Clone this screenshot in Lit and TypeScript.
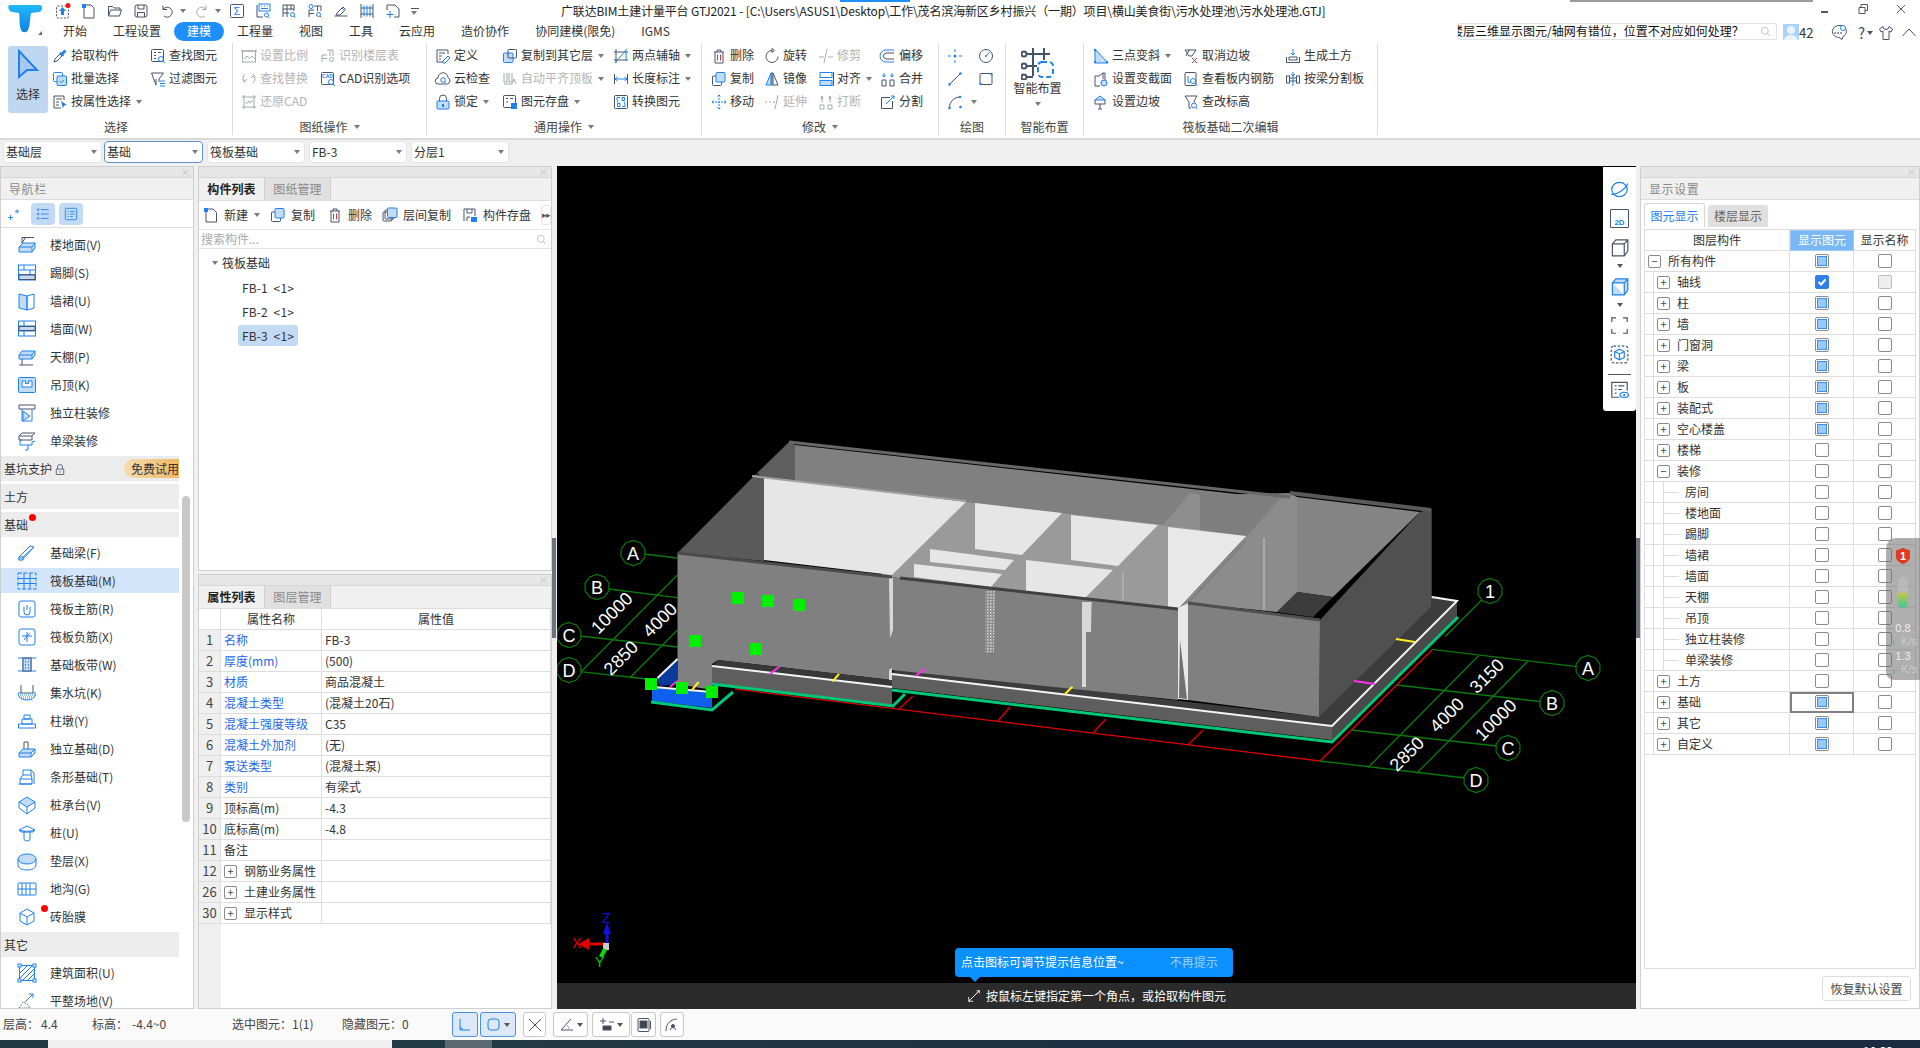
import { LitElement, html, css, svg } from "lit";
import { customElement } from "lit/decorators.js";

// icons are 16x16 unless noted, classes: b blue stroke, f light fill, k solid blue, g grey stroke
const IC: Record<string, unknown> = {
  upload: svg`<rect x="1.5" y="3" width="12" height="12" rx="1" stroke-dasharray="2 1.5"/><path class="k" d="M7.5 4l3.5 4H9v4H6V8H4z"/><circle class="red" cx="13" cy="2.5" r="2.5"/>`,
  newdoc: svg`<path d="M3 2h7l3 3v10H3z"/><rect class="k" x="1" y="1" width="4" height="4"/>`,
  open: svg`<path d="M1.5 13V3.5h4L7 5h6v2M1.5 13l2-6h11l-2 6z"/>`,
  save: svg`<rect x="2" y="2" width="12" height="12" rx="2"/><path d="M5 2v4h6V2M4.5 14V9.5h7V14"/>`,
  undo: svg`<path d="M4 2.5v4h4M4 6.5a5 5 0 111 6.5"/>`,
  redo: svg`<path class="g" d="M12 2.5v4H8M12 6.5a5 5 0 10-1 6.5"/>`,
  sigma: svg`<rect x="1.5" y="1.5" width="13" height="13" rx="1"/><text class="tx" x="8" y="12" text-anchor="middle" font-size="11">Σ</text>`,
  q1: svg`<path d="M2 2v12h6"/><rect class="b" x="4" y="1" width="11" height="7"/><path class="b" d="M6 3h1M9 3h1M12 3h1M6 5.500h7"/><circle class="b" cx="11.500" cy="12" r="2"/><path class="b" d="M13 13.500l1.500 1.500"/>`,
  q2: svg`<path d="M2 14V2h11v6M2 6h11M2 10h6M6 2v12M10 2v5"/><circle class="b" cx="11.500" cy="11.500" r="2"/><path class="b" d="M13 13l1.500 1.500"/>`,
  q3: svg`<path d="M2 14V7h5M7 3h7v5M2 10.500h5M10.500 3v5"/><circle class="b" cx="4" cy="3.500" r="2"/><circle class="b" cx="11.500" cy="11.500" r="2"/><path class="b" d="M13 13l1.500 1.500"/>`,
  pen: svg`<path d="M1.500 13h13M4 10l6-6 2.500 2.500L7 12H3z"/><path class="b" d="M9 5l2.500 2.500"/>`,
  ruler: svg`<path d="M2 1v14M14 1v14M2 5h12M2 11h12"/><path class="b" d="M5 2.500v11M8 2.500v11M11 2.500v11"/>`,
  q7: svg`<path d="M2 7V2h8l4 4v8H9"/><path class="b" d="M5 8v7M1.500 11.500h7"/>`,
  pick: svg`<path d="M2 14l1-3 5-5 2 2-5 5z"/><path class="k" d="M9.500 4.500l3-3 2 2-3 3 .5 1-1 1-3.500-3.500 1-1z"/>`,
  batch: svg`<rect class="b" x="1.500" y="1.500" width="9" height="9" rx="1"/><rect class="b f" x="5" y="5" width="9.500" height="9.500" rx="1"/><path class="b" d="M7.500 10l2 1.500 2.500-2.500"/>`,
  attr: svg`<path d="M12 6V2H2v12h7"/><path d="M4 5h6M4 8h3M4 11h3"/><path class="k" d="M9 7l6 4-3 .5-1 3z"/>`,
  find: svg`<rect x="1.500" y="1.500" width="12" height="12" rx="1"/><path d="M4 4.500h2M4 7.500h2M4 10.500h2M8 4.500h3"/><circle class="b" cx="11" cy="11" r="2.500"/><path class="b" d="M13 13l2 2"/>`,
  filter: svg`<path d="M1.500 2h12L9 8v3M6 8v6L1.500 2"/><path class="b" d="M10 10h5M10 12.500h5M10 15h5"/>`,
  scale: svg`<rect class="g" x="1.500" y="3" width="13" height="11"/><path class="g" d="M1 1.500l0 3M15 1.500l0 3M1 3h14M3 11l3-3 2.500 2.500L11 8l3 3"/>`,
  rec: svg`<path class="g" d="M2 14V7h5M7 2h6v6M2 10.500h5M10 2v6"/><circle class="g" cx="11.500" cy="11.500" r="2"/>`,
  replace: svg`<path class="g" d="M4 3a6 6 0 000 9M12 3a6 6 0 010 9M2 8l2 2 2-2M10 7l2-2 2 2"/>`,
  cad: svg`<rect x="1.500" y="1.500" width="12" height="12" rx="1"/><text class="tb" x="7.500" y="7" text-anchor="middle" font-size="5">CAD</text><circle class="b" cx="11" cy="11" r="2.500"/><path class="b" d="M13 13l2 2"/>`,
  restore: svg`<path class="g" d="M1 3h14M3 1v14M1 13h14M13 1v14M5 10l3-3 1 2 3-3"/>`,
  define: svg`<path d="M13 6V2H2v12h6"/><path d="M4 5h6M4 8h3M4 11h2"/><path class="b" d="M8 13l5-5 2 2-5 5H8z"/>`,
  cloud: svg`<path d="M3.500 13a3 3 0 01-.5-6A5 5 0 0113 6.500 3.500 3.500 0 0112.500 13z"/><circle class="b" cx="8" cy="9" r="2.300"/><path class="b" d="M9.700 10.700l1.500 1.500"/>`,
  lock: svg`<path d="M4.500 7V4.500a3.500 3.500 0 017 0V7"/><rect class="b f" x="2" y="7" width="12" height="8" rx="1"/><path class="k" d="M7 10h2v3H7z"/>`,
  copyto: svg`<rect class="f b" x="1.500" y="5" width="9.500" height="9.500" rx="1"/><rect x="6" y="1.500" width="8.500" height="8.500" rx="1"/>`,
  level: svg`<path class="g" d="M2 2v9h3V2M7 2v9h3V2M2 13h8l2-5 2 5"/>`,
  store: svg`<rect x="1.500" y="1.500" width="12" height="12" rx="1"/><path d="M4 4.500h2M4 8h2M8 4.500h3"/><path class="k" d="M9 9h6v6H9z"/>`,
  twopt: svg`<path d="M3 1v14M1 4h14M1 12h14"/><path class="b" d="M2 15L14 1M13 3v10"/>`,
  dim: svg`<path d="M1.500 3v10M14.500 3v10"/><path class="b" d="M2 8h12M2 8l2.500-2M2 8l2.500 2M14 8l-2.500-2M14 8l-2.500 2"/>`,
  conv: svg`<rect x="1.500" y="1.500" width="13" height="13" rx="1"/><path class="b" d="M4 6V3.500h3M12 10v2.500H9M5 8.500l-1-2.500M11 7.500l1 2.500M4.500 12.500H7V9.500H4.500zM9 3.500h2.500V6.500H9z"/>`,
  del: svg`<path d="M3 4h10M6 4V2h4v2M4 4v11h8V4"/><path class="r" d="M6.500 6.500v6M9.500 6.500v6"/>`,
  copy: svg`<rect x="1.500" y="5" width="9" height="9.500" rx="1"/><rect class="f b" x="5" y="1.500" width="9" height="9.500" rx="1"/>`,
  move: svg`<path class="b" d="M8 1v14M1 8h14M8 1L6 3M8 1l2 2M8 15l-2-2M8 15l2-2M1 8l2-2M1 8l2 2M15 8l-2-2M15 8l-2 2" stroke-dasharray="2 1"/>`,
  rotate: svg`<path d="M8 2.500a6 6 0 106 6"/><path d="M8 .5v4l2.500-2z"/>`,
  mirror: svg`<path class="f b" d="M7 2L2 14h5z"/><path d="M9 2l5 12H9zM8 1v14"/>`,
  extend: svg`<path class="g" d="M1 8h2M5 8h2M9 8h2M11 15l3-14" />`,
  trim: svg`<path class="g" d="M1 9h5M6 15L9 1M10 9h5"/>`,
  align: svg`<rect class="b" x="2" y="1.500" width="12" height="5"/><rect class="f b" x="2" y="9.500" width="12" height="5"/><path d="M15.500 1v14"/>`,
  brk: svg`<path class="g" d="M2 15v-4h4v4zM10 15v-4h4v4zM4 8V2M12 8V2M3 5l1-3 1 3M11 5l1-3 1 3"/>`,
  offset: svg`<path class="b" d="M14 2H6a6 6 0 000 12h8"/><path d="M14 5H6.500a3 3 0 000 6H14"/>`,
  merge: svg`<path d="M2 9h4v6H2zM10 9h4v6h-4z"/><path class="b" d="M4 2v4M12 2v4M2.500 4L4 6l1.500-2M10.500 4L12 6l1.500-2"/>`,
  split: svg`<path d="M10 3.500H1.500v11h11V7"/><path class="b" d="M6 10l8-8M11 2h3v3"/>`,
  point: svg`<path class="b" d="M8 1v3M8 12v3M1 8h3M12 8h3"/><circle class="k" cx="8" cy="8" r="1.500"/>`,
  circle: svg`<circle cx="8" cy="8" r="6.500"/><path class="b" d="M8 8l3.500-3.500"/><circle class="k" cx="8" cy="8" r="1"/>`,
  line: svg`<path d="M2.500 13.500l11-11"/><circle class="k" cx="2.500" cy="13.500" r="1.300"/><circle class="k" cx="13.500" cy="2.500" r="1.300"/>`,
  rect: svg`<rect x="2" y="2.500" width="12" height="11" rx="1"/><circle class="k" cx="2.500" cy="13" r="1.200"/><circle class="k" cx="13.500" cy="3" r="1.200"/>`,
  arc: svg`<path d="M2.500 14c0-6 4-11 11-11"/><circle class="k" cx="2.500" cy="14" r="1.300"/><circle class="k" cx="13.500" cy="13" r="1.300"/><circle class="k" cx="13" cy="3" r="1.300"/>`,
  threep: svg`<path class="b f" d="M2 1v14h13z"/><circle class="k" cx="2" cy="2" r="1.200"/><circle class="k" cx="2" cy="14" r="1.200"/><circle class="k" cx="14" cy="14" r="1.200"/>`,
  varsec: svg`<path d="M2 5h4l4-3h2v7M2 5v10h5"/><path d="M10 2v6"/><circle class="b f" cx="11" cy="12" r="3"/>`,
  slope: svg`<path class="b f" d="M2 6l5-4 5 4z"/><path d="M2 6v4h10V6M7 10v5M5 15h4"/>`,
  cancel: svg`<path d="M2 2h11l-4 6H6zM3 8l3-6"/><path class="r" d="M9 10l5 5M14 10l-5 5"/>`,
  rebar: svg`<rect x="2" y="1.500" width="11" height="13" rx="1"/><path class="b" d="M5 5v6l2 1"/><circle class="b" cx="10" cy="10" r="2.500"/><path class="b" d="M12 12l2.500 2.500"/>`,
  elev: svg`<path d="M2 2h12l-3 5 1 1.500M2 2l4 6v6h2"/><circle class="b" cx="11" cy="11.500" r="2.500"/><path class="b" d="M13 13.500l1.500 1.500"/>`,
  soil: svg`<path d="M1.500 9v5.500h13V9"/><path d="M4 9h8v3H4z"/><path class="b" d="M8 1v6M6 5l2 2 2-2"/>`,
  splitb: svg`<rect x="1.500" y="5" width="3" height="7"/><rect x="11.500" y="5" width="3" height="7"/><path d="M5 7h6M5 10h6"/><path class="b" d="M8 1v14M6 3l2 2 2-2"/>`,
  search: svg`<circle class="g" cx="7" cy="7" r="5"/><path class="g" d="M11 11l3.500 3.500"/>`,
  chat: svg`<path d="M3 4a7 6 0 1110 7.500l-1 3-3-2a7 6 0 01-6-8.500z"/><circle cx="5" cy="8" r=".5"/><circle cx="8" cy="8" r=".5"/><circle cx="11" cy="8" r=".5"/><circle class="b bgw" cx="13" cy="3" r="2.500"/>`,
  shirt: svg`<path d="M5 1.500L1.500 4l1.500 3 2-1v8.500h6V6l2 1 1.500-3L11 1.500a3 3 0 01-6 0z"/>`,
  chevron: svg`<path d="M1.500 11L8 4l6.500 7"/>`,
  plus2: svg`<path class="b" d="M1 12h6M4 9v6M9 5h5M11.500 2.500v5"/>`,
  list: svg`<circle class="b" cx="2.500" cy="3" r="1"/><circle class="b" cx="2.500" cy="8" r="1"/><circle class="b" cx="2.500" cy="13" r="1"/><path class="b" d="M5.500 3h9M5.500 8h9M5.500 13h9"/>`,
  doclist: svg`<rect class="b" x="1.500" y="1.500" width="13" height="13" rx="1"/><path class="b" d="M4 5h1.500M7 5h5M4 8h1.500M7 8h5M4 11h1.500M7 11h3"/>`,
  nnew: svg`<path d="M3 2h7l3.500 3.500V15H3z"/><rect class="k" x="1" y="1" width="4" height="4"/>`,
  layer: svg`<rect x="1" y="5" width="9" height="9" rx="1"/><rect x="3" y="3" width="9" height="9" rx="1" /><rect class="f b" x="5.500" y="1" width="9.500" height="9.500" rx="1"/>`,
  csave: svg`<path d="M2 14V2h11v7M5 2v4h5V2M5 14v-4h3"/><path class="k" d="M9 10h6v5H9z"/>`,
  globe: svg`<ellipse class="b" cx="8" cy="8" rx="6.500" ry="6"/><path class="b" d="M1 12c4 1 12-4 14-9"/>`,
  cube: svg`<path d="M2 5v10h10V5zM2 5l3-3.500h10V11l-3 4M12 5l3-3.500"/>`,
  cubef: svg`<path class="b f" d="M2 5v10h10V5zM2 5l3-3.500h10V11l-3 4M12 5l3-3.500"/>`,
  frame: svg`<path d="M1.500 5V1.500H5M11 1.500h3.500V5M1.500 11v3.500H5M11 14.500h3.500V11"/>`,
  dcube: svg`<rect x="1" y="1" width="14" height="14" rx="2" stroke-dasharray="2 1.500"/><path class="b" d="M8 3.500l4 2v5l-4 2-4-2v-5zM4 5.500l4 2 4-2M8 7.500v5"/>`,
  doceye: svg`<path d="M14.500 9V2h-13v12.500H8"/><path d="M4 5h1.500M7 5h5M4 8h1.500M7 8h3M4 11h1.500"/><ellipse class="b" cx="12" cy="12.500" rx="3.500" ry="2.200"/><circle class="k" cx="12" cy="12.500" r="1"/>`,
  corner: svg`<path d="M14 2L2 14M2 14h5M2 14V9M9 7l5-5M11 2h3v3" />`,
  ortho: svg`<path class="b" d="M3 2v11h10"/><path class="b" d="M3 11h2v2"/>`,
  srect: svg`<rect class="b" x="2" y="2" width="11" height="11" rx="3"/>`,
  cross: svg`<path d="M2 2l12 12M14 2L2 14"/>`,
  angle: svg`<path d="M12 2L2 13h12"/><path class="g" d="M8 8q2 2 2 5"/>`,
  dimt: svg`<path d="M4 1v6M1 4h6"/><rect x="4" y="9" width="8" height="4" fill="#444"/><path d="M10 5h5"/>`,
  map3: svg`<rect x="2" y="1.500" width="11" height="13" rx="1"/><rect x="4" y="4" width="7" height="7" fill="#444"/><path d="M14.500 4v8"/>`,
  edge: svg`<path d="M2 14C2 7 6 2.500 13 2"/><circle cx="9" cy="9" r="1.500" fill="#555"/><path d="M6 13l3-4 3 4"/>`,
  close: svg`<path d="M3 3l10 10M13 3L3 13"/>`,
};

const NIC: Record<string, unknown> = {
  floor: svg`<path class="g2" d="M5 8V2.500h12M5 8l3.500-5.500"/><path class="b f" d="M2 12l4-4h12l-3 4zM2 12v5h13v-5M15 17l3-4V8"/>`,
  skirt: svg`<rect class="b" x="1.500" y="2" width="17" height="15"/><path class="b" d="M1.500 7h17M1.500 11.500h17M7 2v5M13 7v4.500"/><rect class="f" x="2" y="12" width="16" height="4.500"/>`,
  dado: svg`<path class="b f" d="M2 3l8 2v14l-8-2z"/><path class="b" d="M10 5l7-2v14l-7 2z"/>`,
  wallf: svg`<rect class="b" x="1.500" y="2" width="17" height="15"/><path class="b" d="M1.500 7h17M1.500 12h17M7 2v5M13 7v5M7 12v5"/><rect class="f" x="2" y="7.500" width="16" height="4"/>`,
  ceil: svg`<path class="b f" d="M2 8l3-4h13l-3 4zM2 8v4h13V8M15 12l3-4V4"/><path class="g2" d="M5 12v6M2 18h14"/>`,
  hang: svg`<rect class="b f" x="1.500" y="2.500" width="17" height="15" rx="1"/><path class="b bgw" d="M5 6v6h10V6h-3.500v2.500h-3V6z"/>`,
  colfin: svg`<path class="g2" d="M2 2h16v4H2z"/><path class="b" d="M5 6v12h10V6"/><path class="b f" d="M6 8l7 5-7 5z"/>`,
  beamfin: svg`<path class="g2" d="M2 5l3-3h13l-3 3zM2 5v4h13V5"/><path class="b" d="M5 9H3v5h12v-3l3-1M11 14v5h-3"/>`,
  fbeam: svg`<path class="b" d="M2 14l11-11 4 1-11 12-4 1z"/><path class="b f" d="M2 14h4v3H2zM6 14l11-10"/>`,
  raft: svg`<rect class="b" x="1" y="2" width="18" height="16" stroke-dasharray="4 1.500"/><path class="b" d="M1 7.500h18M1 12.500h18M7 2v16M13 2v16"/>`,
  rmain: svg`<rect class="b" x="2" y="2" width="16" height="16" rx="2"/><path class="b" d="M7 8v5a3 3 0 006 0V8M10 6v5"/>`,
  rneg: svg`<rect class="b" x="2" y="2" width="16" height="16" rx="2"/><path class="b" d="M5 9h10M10 5v10M7 13l3-4 3-3"/>`,
  strip: svg`<path class="b" d="M1 3h18M1 16h18M6 3v13M14 3v13"/><rect class="f" x="6" y="3" width="8" height="13"/><path class="b" stroke-dasharray="1.500 1.500" d="M8.500 3v13M11.500 3v13"/>`,
  sump: svg`<path class="g2" d="M4 2v8h12V2"/><path class="b" d="M1 10h3M16 10h3"/><path class="b" stroke-dasharray="1 1" d="M1 12h18M2 14h16M4 16h12"/><path class="b" d="M1 11c2 8 16 8 18 0"/>`,
  pier: svg`<path class="b" d="M7 4h6v4H7zM5 8h10v5H5zM1.500 13h17v4h-17z"/>`,
  iso: svg`<path class="g2" d="M7 10V3h4v7"/><path class="b f" d="M2 14l4-4h12l-4 4zM2 14v4h12v-4M14 18l4-4v-4"/>`,
  stripf: svg`<path class="b" d="M6 8V3h8l3 3v11M6 8h8M14 3v5"/><path class="b" d="M3 12h12v5H3zM1.500 17H15M6 8l-3 4M14 8l1 4"/>`,
  cap: svg`<path class="b f" d="M10 2l8 5-8 5-8-5z"/><path class="b" d="M2 7v6l8 6 8-6V7M10 12v7"/>`,
  pile: svg`<path class="b" d="M2 7l8-4 8 4-2 2H4z"/><path class="b f" d="M2 7l8 2 8-2"/><path class="b" d="M7 9v7a3 2 0 006 0V9"/>`,
  cushion: svg`<ellipse class="b f" cx="10" cy="8" rx="9" ry="5"/><path class="b" d="M1 8v6c0 3 4 5 9 5s9-2 9-5V8"/>`,
  ditch: svg`<rect class="b" x="1" y="4" width="18" height="12" rx="1"/><path class="b" d="M1 10h18M5 4v12M9 4v12M13 4v12"/>`,
  brick: svg`<path class="b" d="M10 2l7 4v8l-7 4-7-4V6zM3 6l7 4 7-4M10 10v8"/>`,
  area: svg`<rect class="b" x="2.500" y="2.500" width="15" height="15"/><path class="b" d="M3 10l7-7M3 15L15 3M6 17L17 6M11 17l6-6"/><rect class="b bgw" x="1" y="1" width="3" height="3"/><rect class="b bgw" x="16" y="1" width="3" height="3"/><rect class="b bgw" x="1" y="16" width="3" height="3"/><rect class="b bgw" x="16" y="16" width="3" height="3"/>`,
  site: svg`<path class="b" d="M8 11l8-8M12 3h4v4"/><path class="g2" d="M2 17l4-6 5 3 2 3z" stroke-dasharray="1 1"/>`,
};

type Item = { t: string; i: string; off?: boolean; caret?: boolean };
type Col = { w: number; items: Item[] };
type Group = { w: number; pad: number; label: string; caret?: boolean; cols: Col[]; big?: string };

const GROUPS: Group[] = [
  {
    w: 233, pad: 8, label: "选择", big: "select",
    cols: [
      { w: 98, items: [{ t: "拾取构件", i: "pick" }, { t: "批量选择", i: "batch" }, { t: "按属性选择", i: "attr", caret: true }] },
      { w: 70, items: [{ t: "查找图元", i: "find" }, { t: "过滤图元", i: "filter" }] },
    ],
  },
  {
    w: 194, pad: 8, label: "图纸操作", caret: true,
    cols: [
      { w: 79, items: [{ t: "设置比例", i: "scale", off: true }, { t: "查找替换", i: "replace", off: true }, { t: "还原CAD", i: "restore", off: true }] },
      { w: 100, items: [{ t: "识别楼层表", i: "rec", off: true }, { t: "CAD识别选项", i: "cad" }] },
    ],
  },
  {
    w: 275, pad: 8, label: "通用操作", caret: true,
    cols: [
      { w: 67, items: [{ t: "定义", i: "define" }, { t: "云检查", i: "cloud" }, { t: "锁定", i: "lock", caret: true }] },
      { w: 111, items: [{ t: "复制到其它层", i: "copyto", caret: true }, { t: "自动平齐顶板", i: "level", off: true, caret: true }, { t: "图元存盘", i: "store", caret: true }] },
      { w: 85, items: [{ t: "两点辅轴", i: "twopt", caret: true }, { t: "长度标注", i: "dim", caret: true }, { t: "转换图元", i: "conv" }] },
    ],
  },
  {
    w: 237, pad: 9, label: "修改", caret: true,
    cols: [
      { w: 53, items: [{ t: "删除", i: "del" }, { t: "复制", i: "copy" }, { t: "移动", i: "move" }] },
      { w: 54, items: [{ t: "旋转", i: "rotate" }, { t: "镜像", i: "mirror" }, { t: "延伸", i: "extend", off: true }] },
      { w: 62, items: [{ t: "修剪", i: "trim", off: true }, { t: "对齐", i: "align", caret: true }, { t: "打断", i: "brk", off: true }] },
      { w: 50, items: [{ t: "偏移", i: "offset" }, { t: "合并", i: "merge" }, { t: "分割", i: "split" }] },
    ],
  },
  {
    w: 67, pad: 8, label: "绘图",
    cols: [
      { w: 31, items: [{ t: "", i: "point" }, { t: "", i: "line" }, { t: "", i: "arc", caret: true }] },
      { w: 20, items: [{ t: "", i: "circle" }, { t: "", i: "rect" }] },
    ],
  },
  { w: 78, pad: 0, label: "智能布置", big: "smart", cols: [] },
  {
    w: 294, pad: 9, label: "筏板基础二次编辑",
    cols: [
      { w: 90, items: [{ t: "三点变斜", i: "threep", caret: true }, { t: "设置变截面", i: "varsec" }, { t: "设置边坡", i: "slope" }] },
      { w: 102, items: [{ t: "取消边坡", i: "cancel" }, { t: "查看板内钢筋", i: "rebar" }, { t: "查改标高", i: "elev" }] },
      { w: 90, items: [{ t: "生成土方", i: "soil" }, { t: "按梁分割板", i: "splitb" }] },
    ],
  },
];

const QUICK = ["upload", "newdoc", "open", "save", "undo", "redo", "sigma", "q1", "q2", "q3", "pen", "ruler", "q7"];
const TABS = ["开始", "工程设置", "建模", "工程量", "视图", "工具", "云应用", "造价协作", "协同建模(限免)", "IGMS"];
const COMBOS = [["基础层", 99, 0], ["基础", 99, 2], ["筏板基础", 98, 4], ["FB-3", 98, 4], ["分层1", 98, 4]] as const;

type NavRow = { t: string; i?: string; band?: boolean; sel?: boolean; dot?: boolean; tag?: boolean };
const NAV: NavRow[] = [
  { t: "楼地面(V)", i: "floor" }, { t: "踢脚(S)", i: "skirt" }, { t: "墙裙(U)", i: "dado" }, { t: "墙面(W)", i: "wallf" },
  { t: "天棚(P)", i: "ceil" }, { t: "吊顶(K)", i: "hang" }, { t: "独立柱装修", i: "colfin" }, { t: "单梁装修", i: "beamfin" },
  { t: "基坑支护", band: true, tag: true }, { t: "土方", band: true }, { t: "基础", band: true, dot: true },
  { t: "基础梁(F)", i: "fbeam" }, { t: "筏板基础(M)", i: "raft", sel: true }, { t: "筏板主筋(R)", i: "rmain" }, { t: "筏板负筋(X)", i: "rneg" },
  { t: "基础板带(W)", i: "strip" }, { t: "集水坑(K)", i: "sump" }, { t: "柱墩(Y)", i: "pier" }, { t: "独立基础(D)", i: "iso" },
  { t: "条形基础(T)", i: "stripf" }, { t: "桩承台(V)", i: "cap" }, { t: "桩(U)", i: "pile" }, { t: "垫层(X)", i: "cushion" },
  { t: "地沟(G)", i: "ditch" }, { t: "砖胎膜", i: "brick", dot: true }, { t: "其它", band: true },
  { t: "建筑面积(U)", i: "area" }, { t: "平整场地(V)", i: "site" },
];

const COMP_TOOLS = [
  { t: "新建", i: "nnew", w: 67, caret: true }, { t: "复制", i: "copy", w: 57 }, { t: "删除", i: "del", w: 55 },
  { t: "层间复制", i: "layer", w: 80 }, { t: "构件存盘", i: "csave", w: 76 },
];

const PROPS: [string, string, string, boolean, boolean?][] = [
  ["1", "名称", "FB-3", true], ["2", "厚度(mm)", "(500)", true], ["3", "材质", "商品混凝土", true],
  ["4", "混凝土类型", "(混凝土20石)", true], ["5", "混凝土强度等级", "C35", true], ["6", "混凝土外加剂", "(无)", true],
  ["7", "泵送类型", "(混凝土泵)", true], ["8", "类别", "有梁式", true], ["9", "顶标高(m)", "-4.3", false],
  ["10", "底标高(m)", "-4.8", false], ["11", "备注", "", false], ["12", "钢筋业务属性", "", false, true],
  ["26", "土建业务属性", "", false, true], ["30", "显示样式", "", false, true],
];

type Layer = [string, number, "+" | "-" | "", string, string];
const LAYERS: Layer[] = [
  ["所有构件", 0, "-", "half", ""], ["轴线", 1, "+", "on", "dis"], ["柱", 1, "+", "half", ""], ["墙", 1, "+", "half", ""],
  ["门窗洞", 1, "+", "half", ""], ["梁", 1, "+", "half", ""], ["板", 1, "+", "half", ""], ["装配式", 1, "+", "half", ""],
  ["空心楼盖", 1, "+", "half", ""], ["楼梯", 1, "+", "", ""], ["装修", 1, "-", "", ""], ["房间", 2, "", "", ""],
  ["楼地面", 2, "", "", ""], ["踢脚", 2, "", "", ""], ["墙裙", 2, "", "", ""], ["墙面", 2, "", "", ""], ["天棚", 2, "", "", ""],
  ["吊顶", 2, "", "", ""], ["独立柱装修", 2, "", "", ""], ["单梁装修", 2, "", "", ""], ["土方", 1, "+", "", ""],
  ["基础", 1, "+", "half", ""], ["其它", 1, "+", "half", ""], ["自定义", 1, "+", "half", ""],
];

const VIEW_TOOLS = ["globe", "2d", "cube", "^", "cubef", "^", "frame", "dcube", "-", "doceye"];

// 3D model, page coordinates
const FACES: [string, string][] = [
  ["#808080", "795,445 1290,500 1278,545 795,490"],
  ["#5e5e5e", "757,473 789,442 795,445 795,483 764,479"],
  ["#5a5a5a", "677.5,553 756,474 764,477 764,561"],
  ["#9a9a9a", "880,576 966,502 1248,535 1178,609"],
  ["#e6e6e6", "764,477 966,502 892,575 764,560"],
  ["#e6e6e6", "975,503 1062,513 1022,555 975,549"],
  ["#e6e6e6", "1071,515 1158,525 1118,566 1071,560"],
  ["#e6e6e6", "930,549 1014,560 1005,570 930,562"],
  ["#e6e6e6", "914,564 1002,574 991,587 914,577"],
  ["#e6e6e6", "1026,560 1113,570 1083,600 1026,593"],
  ["#e8e8e8", "1168,527 1246,536 1178,609 1168,607"],
  ["#8e8e8e", "1163,525 1190,493 1200,495 1200,529"],
  ["#7e7e7e", "1200,495 1290,493 1248,536 1200,530"],
  ["#8c8c8c", "1178,609 1248,535 1278,501 1290,493 1188,603"],
  ["#8c8c8c", "1188,603 1290,493 1297,497 1297,593 1277,612"],
  ["#848484", "1297,497 1420,512 1333,597 1297,592"],
  ["#3c3c3c", "1297,592 1333,597 1313,617 1277,612"],
  ["#3c3c3c", "895,668 1319.5,717 1431.7,606.700 1431.7,597 1457,601 1332,726 892,674"],
  ["#5e5e5e", "892,674 1332,726 1332,740 892,688"],
  ["#4a4a4a", "1332,726 1457,601 1457,617 1332,740"],
  ["#808080", "677.5,553 1178,609 1178,700 892,670 892,680 718,660 712,664 712,690 677.5,684"],
  ["#e8e8e8", "1178,608 1188,603 1188,700 1178,699"],
  ["#707070", "1180,640 1187,699 1179,698"],
  ["#808080", "1188,603 1320,620 1319.5,717 1188,700"],
  ["#505050", "1320,620 1319.5,717 1431.7,606.700 1431.7,509 1420,512"],
  ["#d8d8d8", "889,578 893,578 893,630 890,638"],
  ["url(#speck)", "985.500,591 995,591 994,652 985.500,653"],
  ["#d8d8d8", "1082,602 1091.6,602 1091,632 1086,632 1086,687 1082,687"],
  ["#383838", "718,660 892,680 892,687 712,666"],
  ["#5e5e5e", "712,666 892,687 892,705 712,683"],
  ["#0a3a9a", "657,678 677.5,660 677.5,684 660,686"],
  ["#1060f0", "652,687 712,692 712,708 652,701"],
  ["#dcdcdc", "889,670 892,668 892,680 889,680"],
];

const LINES: [string, number, string][] = [
  // axis and red grid go under the model, see renderScene
  ["#686868", 3, "789,442 1290,497"],
  ["#a0a0a0", 2, "752,476 966,501"],
  ["#5a5a5a", 4, "1290,493 1431,510"],
  ["#bdbdbd", 1, "1123,572 1123,603"],
  ["#c8c8c8", 1, "1264,538 1264,610"],
  ["#4a4a4a", 3, "677.5,553 892,577"],
  ["#404040", 3, "900,578 1178,609"],
  ["#4f4f4f", 3, "1188,603 1320,620"],
  ["#f5f5f5", 2, "892,674 1332,726 1457,601 1431.7,597"],
  ["#f5f5f5", 2, "712,666 892,687"],
  ["#f5f5f5", 2, "657.5,678 677.5,659"],
  ["#f5f5f5", 2, "651,686.700 712,692"],
  ["#00c878", 3, "892,690 1332,742 1458,617"],
  ["#00c878", 3, "712,684 893,706 905,694"],
  ["#00c878", 3, "651,702 712,710 733,692"],
  ["#ffee22", 2, "1396,639 1415,642"],
  ["#ff33ee", 2, "1354,681 1375,684"],
  ["#ff33ee", 2, "770,674 779,667"],
  ["#ffee22", 2, "832.500,681.700 839,674"],
  ["#ff33ee", 2, "915.500,676 925.500,668.700"],
  ["#ffee22", 2, "1064.800,694.300 1072.400,686.700"],
  ["#ff33ee", 2, "670,686.700 678,680.700"],
  ["#ffee22", 2, "692,690 698.500,682"],
];

const UNDER: [string, string][] = [
  ["#e00000", "735,689 1320,761 1432,650"],
  ["#e00000", "899,709 913,696"], ["#e00000", "997,722 1010,707"], ["#e00000", "1093,733 1106,719"], ["#e00000", "1188,745 1203,730"],
  ["#0a7a0a", "644,554 677.5,558"], ["#0a7a0a", "608.600,589 677.5,597.700"], ["#0a7a0a", "580,636 677.5,647"], ["#0a7a0a", "580,671.700 647,679"],
  ["#0a7a0a", "581,671.700 677.5,575"], ["#0a7a0a", "629.600,678 677.5,630"],
  ["#0a7a0a", "1481.700,600 1445,636.700"], ["#0a7a0a", "1576.700,666.700 1431.700,649.300"], ["#0a7a0a", "1540.700,701.700 1396.700,685"],
  ["#0a7a0a", "1496.700,746 1351.700,730"], ["#0a7a0a", "1465,778 1320,761"], ["#0a7a0a", "1368.300,767.300 1478.300,656"], ["#0a7a0a", "1416.700,773.300 1528.300,660.700"],
];

const SQUARES = [[738, 598], [768, 601], [799, 605], [695, 641], [756, 649], [651, 684], [682, 688], [712, 692]];
const BUBBLES: [string, number, number][] = [
  ["A", 633, 553], ["B", 597, 587], ["C", 569, 635], ["D", 569, 670],
  ["1", 1490, 591], ["A", 1588, 668], ["B", 1552, 703], ["C", 1508, 748], ["D", 1476, 780],
];
const DIMS: [string, number, number][] = [
  ["10000", 612, 613], ["4000", 660, 620], ["2850", 621, 658],
  ["3150", 1487, 676], ["4000", 1447, 715], ["10000", 1496, 720], ["2850", 1407, 754],
];

const octagon = (cx: number, cy: number, r: number) =>
  Array.from({ length: 10 }, (_, i) => {
    const a = (i * Math.PI) / 5 + Math.PI / 10;
    return `${(cx + r * Math.cos(a)).toFixed(1)},${(cy + r * Math.sin(a)).toFixed(1)}`;
  }).join(" ");

@customElement("app-root")
export class AppRoot extends LitElement {
  static styles = css`
    :host {
      display: block;
      width: 1920px;
      height: 1048px;
      overflow: hidden;
      background: #f0f0f0;
      color: #333;
      font: 12px/1.2 "Noto Sans CJK SC", "Noto Sans", sans-serif;
    }
    .app { position: relative; display: flex; flex-direction: column; height: 1048px; }
    .ic { display: block; width: 16px; height: 16px; flex: none; fill: none; stroke: #47536a; stroke-width: 1; overflow: visible; }
    .ic .b { stroke: #1f80ee; }
    .ic .g { stroke: #a4a9b0; }
    .ic .g2 { stroke: #47536a; }
    .ic .r { stroke: #d8332f; }
    .ic .f { fill: #c3dcf6; }
    .ic .k { fill: #1f80ee; stroke: none; }
    .ic .red { fill: #f01616; stroke: none; }
    .ic .bgw { fill: #fff; }
    .ic .tx { fill: #1f80ee; stroke: none; font-family: "Liberation Sans", sans-serif; }
    .ic .tb { fill: #1f80ee; stroke: none; font-family: "Liberation Sans", sans-serif; font-weight: 700; }
    .caret { display: inline-block; width: 0; height: 0; flex: none; margin-left: 6px; border: 3px solid transparent; border-top: 4px solid #7a7a7a; border-bottom: 0; }

    .head { display: flex; height: 41px; background: #fff; }
    .logo { width: 50px; flex: none; display: flex; position: relative; }
    .logo svg { width: 36px; height: 30px; margin: 3px 0 0 7px; }
    .logo i { position: absolute; left: 38px; top: 31px; width: 0; height: 0; border-left: 4px solid transparent; border-bottom: 4px solid #666; }
    .head-r { flex: 1; display: flex; flex-direction: column; min-width: 0; }
    .qrow { height: 22px; display: flex; align-items: center; position: relative; }
    .quick { width: 511px; flex: none; display: flex; align-items: center; padding-left: 5px; box-sizing: border-box; }
    .qi { width: 26px; display: flex; }
    .qi.car { width: 35px; align-items: center; }
    .qi.car .caret { margin-left: 5px; }
    .qmore { width: 8px; border-top: 1px solid #555; padding-top: 2px; }
    .qmore .caret { margin: 0; display: block; }
    .title { white-space: nowrap; color: #222; letter-spacing: -.14px; }
    .winbtn { position: absolute; right: 0; top: 4px; display: flex; }
    .winbtn svg { width: 10px; height: 10px; stroke: #555; fill: none; margin-left: 28px; }
    .winbtn svg:last-child { margin-right: 14px; }
    .trow { height: 19px; display: flex; align-items: center; position: relative; }
    .tab { height: 19px; line-height: 17px; padding: 0 13px; white-space: nowrap; color: #333; }
    .tab.on { background: #1e8fff; color: #fff; border-radius: 10px; }
    .search { position: absolute; left: 1407px; top: 1px; width: 318px; height: 15px; padding-right: 0; border: 1px solid #e2e2e2; border-radius: 2px; background: #fff; display: flex; align-items: center; overflow: hidden; white-space: nowrap; color: #111; }
    .search span { margin-left: -7px; width: 290px; flex: none; }
    .search svg { width: 11px; height: 11px; margin-left: 19px; }
    .avatar { position: absolute; left: 1733px; top: 2px; width: 16px; height: 16px; background: #a9d3fb; display: flex; }
    .avatar svg { width: 16px; height: 16px; fill: #e8f3fd; }
    .num { position: absolute; left: 1749px; top: 3px; font-size: 13px; }
    .ticons { position: absolute; left: 1780px; top: 2px; display: flex; align-items: center; color: #47536a; font-size: 15px; }
    .ticons .q { width: 25px; display: flex; align-items: center; justify-content: center; }
    .ticons .q .caret { margin-left: 2px; border-top-color: #47536a; }
    .ticons .ic { margin-right: 7px; }

    .ribbon { height: 99px; box-sizing: border-box; background: #fff; border-bottom: 2px solid #d9d9d9; display: flex; padding-top: 2px; }
    .grp { box-sizing: border-box; height: 92px; border-right: 1px solid #dcdcdc; display: flex; flex-direction: column; }
    .grp-b { display: flex; height: 76px; padding-top: 1px; box-sizing: border-box; }
    .grp-l { height: 16px; line-height: 16px; text-align: center; color: #444; display: flex; justify-content: center; align-items: center; }
    .col { flex: none; }
    .it { height: 23px; display: flex; align-items: center; white-space: nowrap; }
    .it .ic { margin-right: 3px; }
    .it.off { color: #b4b4b4; }
    .it .caret { margin-left: 5px; }
    .bigsel { width: 40px; height: 67px; flex: none; margin: 2px 4px 0 0; background: #bfd7f0; border-radius: 3px; display: flex; flex-direction: column; align-items: center; }
    .bigsel svg { width: 24px; height: 30px; margin: 3px 0 8px; }
    .smart { width: 100%; padding-right: 14px; box-sizing: border-box; display: flex; flex-direction: column; align-items: center; }
    .smart svg { width: 34px; height: 34px; margin-top: 2px; }
    .smart span { margin-top: 1px; }
    .smart .caret { margin: 7px 0 0; }

    .combos { height: 26px; display: flex; align-items: flex-start; padding: 1px 0 0 3px; box-sizing: border-box; }
    .combo { height: 22px; box-sizing: border-box; flex: none; background: #fff; border: 1px solid #e4e4e4; border-radius: 4px; display: flex; align-items: center; padding: 0 4px 0 2px; justify-content: space-between; }
    .combo.on { border-color: #5f8fd0; }

    .main { height: 843px; display: flex; }
    .panel { background: #fff; border: 1px solid #cfcfcf; box-sizing: border-box; display: flex; flex-direction: column; position: relative; }
    .strip { height: 10px; flex: none; background: #e6e6e6; border-bottom: 1px solid #d6d6d6; display: flex; justify-content: flex-end; align-items: center; }
    .strip svg { width: 9px; height: 9px; stroke: #a8a8a8; fill: none; margin-right: 3px; }
    .ptitle { height: 21px; flex: none; background: #f0f0f0; line-height: 21px; padding-left: 8px; color: #8a8a8a; border-bottom: 1px solid #dcdcdc; letter-spacing: .6px; }

    .nav { width: 194px; flex: none; }
    .navtool { height: 27px; flex: none; display: flex; align-items: center; border-bottom: 1px solid #ddd; padding-left: 6px; }
    .navtool .ic { width: 14px; height: 14px; }
    .navtool > .ic { margin-right: 6px; }
    .nb { width: 24px; height: 22px; background: #c2daf3; border-radius: 4px; display: flex; align-items: center; justify-content: center; margin-left: 4px; }
    .nav-list { flex: 1; padding-top: 3px; overflow: hidden; position: relative; }
    .nrow { height: 28px; width: 178px; display: flex; align-items: center; position: relative; }
    .nrow .ic { width: 20px; height: 20px; margin: 0 13px 0 16px; }
    .nrow.sel::before, .nrow.band::before { content: ""; position: absolute; inset: 1px 0 2px 0; z-index: 0; }
    .nrow.sel::before { background: #d2e5fb; }
    .nrow.band::before { background: #ececec; }
    .nrow > * { position: relative; z-index: 1; }
    .nrow.band span { margin-left: 3px; }
    .dot { width: 7px; height: 7px; border-radius: 50%; background: #f00; position: absolute !important; }
    .band .dot { left: 28px; top: 3px; }
    .item-dot { left: 40px; top: 2px; }
    .lock { width: 10px !important; height: 11px !important; margin: 0 0 0 3px !important; }
    .tag { position: absolute !important; right: 0; top: 4px; height: 19px; line-height: 19px; width: 48px; padding-left: 7px; white-space: nowrap; border-radius: 9px 0 0 9px; background: linear-gradient(90deg, #f7dcb0, #f0b863); color: #333; }
    .sbar { position: absolute; left: 181px; top: 268px; width: 8px; height: 326px; border-radius: 4px; background: #c8c8c8; }

    .mid { width: 354px; margin-left: 4px; flex: none; display: flex; flex-direction: column; gap: 3px; }
    .mid .panel:first-child { height: 405px; flex: none; }
    .mid .panel:last-child { flex: 1; }
    .tabs { height: 22px; flex: none; display: flex; background: #f0f0f0; border-bottom: 1px solid #dcdcdc; }
    .ptab { width: 65px; text-align: center; line-height: 22px; color: #8a8a8a; background: #e0e0e0; border: 1px solid #cfcfcf; border-width: 0 1px 0 0; letter-spacing: .1px; }
    .ptab.on { background: #f0f0f0; color: #222; font-weight: 700; }
    .ctools { height: 28px; flex: none; display: flex; align-items: center; padding-left: 4px; border-bottom: 1px solid #e4e4e4; position: relative; }
    .ct { display: flex; align-items: center; flex: none; }
    .ct .ic { margin-right: 5px; }
    .more { width: 9px; height: 18px; border: 1px solid #e2e2e2; border-radius: 3px; display: flex; align-items: center; justify-content: center; color: #555; font-size: 9px; letter-spacing: -1px; margin-left: 3px; }
    .csearch { height: 18px; flex: none; border-bottom: 1px solid #e2e2e2; padding: 0 4px 0 2px; display: flex; justify-content: space-between; align-items: center; color: #aaa; }
    .csearch svg { width: 11px; height: 11px; }
    .tree { padding-top: 2px; }
    .tn { height: 24px; display: flex; align-items: center; }
    .tn .caret { margin: 0 4px 0 13px; border-width: 3px; border-top-width: 4px; }
    .leaf { padding: 0 4px; margin-left: 39px; height: 21px; line-height: 21px; border-radius: 3px; white-space: pre; letter-spacing: .15px; }
    .leaf.on { background: #c2daf3; }

    .ptable { display: grid; grid-template-columns: 22px 101px 229px; flex: none; }
    .ptable > div { height: 21px; box-sizing: border-box; border-right: 1px solid #ddd; border-bottom: 1px solid #ddd; display: flex; align-items: center; white-space: nowrap; }
    .ptable .n { background: #efefef; justify-content: center; font-size: 13px; color: #444; }
    .ptable .h { justify-content: center; }
    .ptable .p { padding-left: 3px; }
    .ptable .v { padding-left: 3px; }
    .ptable .blue { color: #2468e8; }
    .exp { width: 11px; height: 11px; flex: none; border: 1px solid #8a8a8a; border-radius: 2px; background: #fff; color: #444; display: flex; align-items: center; justify-content: center; font-size: 11px; line-height: 1; box-sizing: content-box; }
    .ptable .exp { margin-right: 7px; }
    .pfill { flex: 1; }
    .pfill div { width: 22px; height: 100%; background: #efefef; }

    .vgut { width: 5px; flex: none; display: flex; align-items: center; }
    .vgut i { display: block; width: 4px; height: 100px; background: #6b7280; }
    .canvas { width: 1079px; flex: none; background: #000; position: relative; overflow: hidden; }
    .scene { position: absolute; left: 0; top: 0; width: 1079px; height: 843px; }
    .viewbar { position: absolute; right: 0; top: 1px; width: 33px; height: 244px; background: #fff; border-radius: 0 0 3px 3px; box-sizing: border-box; padding-top: 13px; display: flex; flex-direction: column; align-items: center; }
    .vb { height: 29px; display: flex; justify-content: center; }
    .vb .ic { width: 19px; height: 19px; }
    .vb.two { font: 700 8px "Liberation Sans", sans-serif; color: #1f80ee; }
    .twod { width: 17px; height: 17px; border: 1px solid #47536a; border-radius: 1px; display: flex; align-items: flex-end; justify-content: center; }
    .vc { height: 10px; margin-top: -3px; margin-bottom: 3px; }
    .vc .caret { margin: 0; border-top-color: #555; border-width: 3px; border-top-width: 4px; display: block; }
    .vd { width: 23px; height: 1px; background: #555; margin: 0 0 5px; }
    .cmd { position: absolute; left: 0; right: 0; bottom: 0; height: 26px; background: #2b2b2b; color: #fff; display: flex; align-items: center; padding-left: 410px; box-sizing: border-box; }
    .cmd .ic { stroke: #fff; width: 14px; height: 14px; margin-right: 5px; }
    .hint { position: absolute; left: 398px; top: 782px; width: 278px; height: 29px; border-radius: 4px; background: #0a90ff; color: #fff; display: flex; align-items: center; padding-left: 6px; box-sizing: border-box; }
    .hint::after { content: ""; position: absolute; left: 15px; bottom: -5px; border: 5px solid transparent; border-top-color: #0a90ff; border-bottom: 0; }
    .hint b { font-weight: 400; color: #9fd2ff; margin-left: 46px; }
    .gizmo { position: absolute; left: 10px; top: 745px; width: 60px; height: 70px; }

    .right { width: 280px; flex: none; padding: 0 3px; box-sizing: border-box; }
    .rtabs { height: 27px; padding-bottom: 2px; flex: none; display: flex; align-items: flex-end; }
    .rt { height: 22px; width: 60px; line-height: 22px; text-align: center; background: #e0e0e0; border-radius: 3px 3px 0 0; color: #666; margin-left: 3px; }
    .rt.on { height: 24px; line-height: 24px; width: 61px; background: #fff; border: 1px solid #d6d6d6; border-bottom: 0; color: #1f80ee; margin-left: 0; box-sizing: border-box; }
    .rwrap { width: 272px; height: 740px; flex: none; box-sizing: border-box; border: 1px solid #dcdcdc; }
    .rtable { display: grid; grid-template-columns: 145px 64px 62px; }
    .rtable > div { height: 21px; box-sizing: border-box; border-bottom: 1px solid #dedede; border-right: 1px solid #dedede; display: flex; align-items: center; justify-content: center; white-space: nowrap; }
    .rtable .hb { background: #7ab8f5; color: #fff; border: 1px solid #a0c8f0; }
    .rtable .c0 { justify-content: flex-start; padding-left: 3px; }
    .rtable .c0 .exp { margin-right: 7px; }
    .rtable .l1 { padding-left: 12px; background: linear-gradient(#dcdcdc, #dcdcdc) 8px 0 / 1px 100% no-repeat; }
    .rtable .l2 { padding-left: 40px; background: linear-gradient(#dcdcdc, #dcdcdc) 8px 0 / 1px 100% no-repeat, linear-gradient(#dcdcdc, #dcdcdc) 18px 0 / 1px 100% no-repeat, linear-gradient(#dcdcdc, #dcdcdc) 18px 10px / 16px 1px no-repeat; }
    .rtable .cur { outline: 2px solid #808080; outline-offset: -2px; }
    .cb { width: 12px; height: 12px; border: 1px solid #8a8a8a; border-radius: 2px; background: #fff; display: flex; align-items: center; justify-content: center; }
    .cb.half i { display: block; width: 10px; height: 10px; background: #99c8ff; border: 1px solid #3a8cf0; box-sizing: border-box; }
    .cb.on { background: #2f80ed; border-color: #2f80ed; }
    .cb.on svg { width: 10px; height: 10px; fill: none; stroke: #fff; stroke-width: 2; }
    .cb.dis { background: #eee; border-color: #bbb; }
    .rfoot { flex: 1; display: flex; justify-content: flex-end; align-items: flex-start; padding: 7px 5px 0 0; }
    .reset { width: 89px; height: 25px; box-sizing: border-box; border: 1px solid #ddd; border-radius: 3px; line-height: 23px; text-align: center; color: #444; }
    .float { position: absolute; left: 1886px; top: 538px; width: 34px; height: 142px; background: rgba(110, 110, 110, .55); border-radius: 10px 0 0 8px; color: #eee; font-size: 11px; font-family: "Liberation Sans", sans-serif; display: flex; flex-direction: column; align-items: center; }
    .float svg.sh { width: 14px; height: 16px; margin-top: 10px; }
    .therm { width: 10px; height: 31px; margin-top: 13px; border-radius: 5px; background: linear-gradient(rgba(190,190,190,.7) 0 50%, #c8c83c 50%, #3cc8a0); }
    .sp { margin-top: 14px; line-height: 13px; text-align: center; }
    .sp + .sp { margin-top: 2px; }
    .sp em { display: block; font-style: normal; color: #ccc; padding-left: 12px; position: relative; }
    .sp em i { position: absolute; left: 2px; top: 1px; font-style: normal; font-size: 10px; }

    .status { height: 31px; background: #fafafa; display: flex; align-items: center; box-sizing: border-box; padding-left: 3px; position: relative; }
    .status span { flex: none; white-space: pre; color: #444; }
    .sbtns { display: flex; position: absolute; left: 452px; top: 3px; }
    .sb { height: 25px; box-sizing: border-box; border: 1px solid #c8c8c8; border-radius: 3px; display: flex; align-items: center; justify-content: center; background: #fff; }
    .sb.on { background: #dbe9fa; border-color: #4a90e2; }
    .sb .caret { margin-left: 2px; border-top-color: #555; }
    .task { height: 8px; background: #1b2c42; display: flex; overflow: hidden; position: relative; }
    .task i { display: block; height: 8px; flex: none; }
    .task b { position: absolute; left: 1863px; top: 5px; color: #fff; font-weight: 400; font-size: 12px; line-height: 12px; }
    .topmark { position: absolute; top: 0; height: 2px; }
  `;

  private ic(name: string) {
    return html`<svg class="ic" viewBox="0 0 16 16">${IC[name]}</svg>`;
  }

  private renderHead() {
    return html`
      <div class="head">
        <div class="logo">
          <svg viewBox="0 0 36 30">
            <defs><linearGradient id="lg" x1="0" x2="0" y1="0" y2="1"><stop offset="0" stop-color="#20b8f8" /><stop offset="1" stop-color="#1280ea" /></linearGradient></defs>
            <path fill="url(#lg)" d="M3 2h30c3 0 3 6-1 7l-8 1c-1 6-1 13-3 17-1 3-6 3-7 0-2-5-1-11-2-17L5 9C1 8 0 2 3 2z" />
          </svg>
          <i></i>
        </div>
        <div class="head-r">
          <div class="qrow">
            <div class="quick">
              ${QUICK.map((q) =>
                q === "undo" || q === "redo"
                  ? html`<div class="qi car">${this.ic(q)}<span class="caret"></span></div>`
                  : html`<div class="qi">${this.ic(q)}</div>`
              )}
              <div class="qmore"><span class="caret"></span></div>
            </div>
            <div class="title">广联达BIM土建计量平台 GTJ2021 - [C:\\Users\\ASUS1\\Desktop\\工作\\茂名滨海新区乡村振兴（一期）项目\\横山美食街\\污水处理池\\污水处理池.GTJ]</div>
            <div class="winbtn">
              <svg viewBox="0 0 10 10"><path d="M1 8h7" stroke-width="2" /></svg>
              <svg viewBox="0 0 10 10"><path d="M1 3.500h6v6H1zM3 3.500V.5h6.500v6H7" /></svg>
              <svg viewBox="0 0 10 10"><path d="M1 1l8 8M9 1L1 9" /></svg>
            </div>
          </div>
          <div class="trow">
            ${TABS.map((t) => html`<div class="tab ${t === "建模" ? "on" : ""}">${t}</div>`)}
            <div class="search">
              <span>楼层三维显示图元/轴网有错位，位置不对应如何处理？</span>
              <svg class="ic" viewBox="0 0 16 16">${IC.search}</svg>
            </div>
            <div class="avatar"><svg viewBox="0 0 16 16"><circle cx="8" cy="6" r="4" /><path d="M1 16c1-4 4-5 7-5s6 1 7 5z" /></svg></div>
            <div class="num">42</div>
            <div class="ticons">
              ${this.ic("chat")}
              <div class="q">?<span class="caret"></span></div>
              ${this.ic("shirt")}
              ${this.ic("chevron")}
            </div>
          </div>
        </div>
      </div>
    `;
  }

  private renderRibbon() {
    return html`
      <div class="ribbon">
        ${GROUPS.map(
          (g) => html`
            <div class="grp" style="width:${g.w}px">
              <div class="grp-b" style="padding-left:${g.pad}px">
                ${g.big === "select"
                  ? html`<div class="bigsel">
                      <svg viewBox="0 0 24 30"><path fill="#a8c8ef" stroke="#1f80ee" stroke-width="2" d="M3 2l18 19H11l-8 7z" /></svg>
                      <span>选择</span>
                    </div>`
                  : ""}
                ${g.big === "smart"
                  ? html`<div class="smart">
                      <svg viewBox="0 0 34 34" fill="none" stroke="#47536a" stroke-width="2">
                        <path d="M12 2v28M23 2v12M2 8h27M2 20h14M2 31h10" />
                        <circle cx="3" cy="8" r="2.500" fill="#fff" /><circle cx="3" cy="20" r="2.500" fill="#fff" /><circle cx="3" cy="31" r="2.500" fill="#fff" />
                        <rect x="17" y="16" width="15" height="15" rx="4" stroke="#1f80ee" stroke-dasharray="5 3" />
                      </svg>
                      <span>智能布置</span>
                      <i class="caret"></i>
                    </div>`
                  : ""}
                ${g.cols.map(
                  (c) => html`
                    <div class="col" style="width:${c.w}px">
                      ${c.items.map(
                        (it) => html`
                          <div class="it ${it.off ? "off" : ""}">
                            ${this.ic(it.i)}${it.t}${it.caret ? html`<span class="caret"></span>` : ""}
                          </div>
                        `
                      )}
                    </div>
                  `
                )}
              </div>
              <div class="grp-l">${g.label}${g.caret ? html`<span class="caret"></span>` : ""}</div>
            </div>
          `
        )}
      </div>
      <div class="combos">
        ${COMBOS.map(
          ([t, w, ml], i) => html`<div class="combo ${i === 1 ? "on" : ""}" style="width:${w}px;margin-left:${ml}px"><span>${t}</span><span class="caret"></span></div>`
        )}
      </div>
    `;
  }

  private strip() {
    return html`<div class="strip"><svg viewBox="0 0 16 16">${IC.close}</svg></div>`;
  }

  private renderNav() {
    return html`
      <div class="panel nav">
        ${this.strip()}
        <div class="ptitle">导航栏</div>
        <div class="navtool">
          ${this.ic("plus2")}
          <div class="nb">${this.ic("list")}</div>
          <div class="nb">${this.ic("doclist")}</div>
        </div>
        <div class="nav-list">
          ${NAV.map(
            (r) => html`
              <div class="nrow ${r.band ? "band" : ""} ${r.sel ? "sel" : ""}">
                ${r.i ? html`<svg class="ic" viewBox="0 0 20 20">${NIC[r.i]}</svg>` : ""}
                <span>${r.t}</span>
                ${r.tag
                  ? html`<svg class="ic lock" viewBox="0 0 12 13"><path d="M3 6V3.500a3 3 0 016 0V6M1.500 6h9v6.500h-9zM6 8.500v2" /></svg>
                      <div class="tag">免费试用</div>`
                  : ""}
                ${r.dot ? html`<i class="dot ${r.band ? "" : "item-dot"}"></i>` : ""}
              </div>
            `
          )}
          <div class="sbar"></div>
        </div>
      </div>
    `;
  }

  private renderMid() {
    return html`
      <div class="mid">
        <div class="panel">
          ${this.strip()}
          <div class="tabs"><div class="ptab on">构件列表</div><div class="ptab">图纸管理</div></div>
          <div class="ctools">
            ${COMP_TOOLS.map(
              (c) => html`<div class="ct" style="width:${c.w}px">${this.ic(c.i)}${c.t}${c.caret ? html`<span class="caret"></span>` : ""}</div>`
            )}
            <div class="more">▸▸</div>
          </div>
          <div class="csearch">搜索构件...<svg class="ic" viewBox="0 0 16 16">${IC.search}</svg></div>
          <div class="tree">
            <div class="tn"><span class="caret"></span>筏板基础</div>
            <div class="tn"><div class="leaf">FB-1  &lt;1&gt;</div></div>
            <div class="tn"><div class="leaf">FB-2  &lt;1&gt;</div></div>
            <div class="tn"><div class="leaf on">FB-3  &lt;1&gt;</div></div>
          </div>
        </div>
        <div class="panel">
          ${this.strip()}
          <div class="tabs"><div class="ptab on">属性列表</div><div class="ptab">图层管理</div></div>
          <div class="ptable">
            <div></div><div class="h">属性名称</div><div class="h">属性值</div>
            ${PROPS.map(
              ([n, name, val, blue, exp]) => html`
                <div class="n">${n}</div>
                <div class="p ${blue ? "blue" : ""}">${exp ? html`<span class="exp">+</span>` : ""}${name}</div>
                <div class="v">${val}</div>
              `
            )}
          </div>
          <div class="pfill"><div></div></div>
        </div>
      </div>
    `;
  }

  private renderScene() {
    return html`
      <svg class="scene" viewBox="557 166 1079 843" font-family="Liberation Sans, sans-serif">
        <defs>
          <pattern id="speck" width="3" height="3" patternUnits="userSpaceOnUse">
            <rect width="3" height="3" fill="#808080" />
            <rect width="1.500" height="1.500" fill="#e0e0e0" />
            <rect x="1.500" y="1.500" width="1" height="1" fill="#d0d0d0" />
          </pattern>
        </defs>
        ${UNDER.map(([c, p]) => svg`<polyline points=${p} fill="none" stroke=${c} stroke-width="1.300" />`)}
        ${FACES.map(([c, p]) => svg`<polygon points=${p} fill=${c} />`)}
        ${LINES.map(([c, w, p]) => svg`<polyline points=${p} fill="none" stroke=${c} stroke-width=${w} />`)}
        ${SQUARES.map(([x, y]) => svg`<rect x=${x - 6} y=${y - 6} width="12" height="12" fill="#00f000" />`)}
        ${BUBBLES.map(
          ([t, x, y]) => svg`
            <polygon points=${octagon(x, y, 12.500)} fill="#000" stroke="#0a7a0a" stroke-width="1.200" />
            <text x=${x} y=${y + 6.500} text-anchor="middle" font-size="18" fill="#fff">${t}</text>
          `
        )}
        ${DIMS.map(
          ([t, x, y]) => svg`<text transform="translate(${x} ${y}) rotate(-45)" y="6" text-anchor="middle" font-size="18" fill="#fff">${t}</text>`
        )}
      </svg>
    `;
  }

  private renderCanvas() {
    return html`
      <div class="canvas">
        ${this.renderScene()}
        <div class="viewbar">
          ${VIEW_TOOLS.map((v) =>
            v === "^"
              ? html`<div class="vc"><span class="caret"></span></div>`
              : v === "-"
              ? html`<div class="vd"></div>`
              : v === "2d"
              ? html`<div class="vb two"><div class="twod">2D</div></div>`
              : html`<div class="vb">${this.ic(v)}</div>`
          )}
        </div>
        <svg class="gizmo" viewBox="0 0 60 70" font-family="Liberation Sans, sans-serif" font-size="14">
          <text x="5" y="37" fill="#e00000">X</text>
          <path d="M40 33H22" stroke="#e00000" stroke-width="3" /><path d="M11 33l11-6v12z" fill="#e00000" />
          <text x="35" y="12" fill="#1010e0">Z</text>
          <path d="M40 36V20" stroke="#1010e0" stroke-width="3" /><path d="M40 11l-4 12h8z" fill="#1010e0" />
          <rect x="36" y="32" width="6" height="7" fill="#ccc" />
          <path d="M38 38l-4 8" stroke="#00e000" stroke-width="4" />
          <text x="28" y="56" fill="#00d000">Y</text>
        </svg>
        <div class="hint">点击图标可调节提示信息位置~<b>不再提示</b></div>
        <div class="cmd">${this.ic("corner")}按鼠标左键指定第一个角点，或拾取构件图元</div>
      </div>
    `;
  }

  private renderRight() {
    return html`
      <div class="panel right">
        <div class="strip" style="margin:0 -3px"><svg viewBox="0 0 16 16">${IC.close}</svg></div>
        <div class="ptitle" style="margin:0 -3px">显示设置</div>
        <div class="rtabs"><div class="rt on">图元显示</div><div class="rt">楼层显示</div></div>
        <div class="rwrap">
          <div class="rtable">
            <div>图层构件</div><div class="hb">显示图元</div><div>显示名称</div>
            ${LAYERS.map(
              ([t, lv, exp, a, b]) => html`
                <div class="c0 ${lv === 1 ? "l1" : lv === 2 ? "l2" : ""}">
                  ${exp ? html`<span class="exp">${exp === "-" ? "−" : "+"}</span>` : ""}${t}
                </div>
                <div class=${t === "基础" ? "cur" : ""}>${this.cb(a)}</div>
                <div>${this.cb(b)}</div>
              `
            )}
          </div>
        </div>
        <div class="rfoot"><div class="reset">恢复默认设置</div></div>
      </div>
    `;
  }

  private cb(state: string) {
    return html`<span class="cb ${state}">
      ${state === "half" ? html`<i></i>` : ""}
      ${state === "on" ? html`<svg viewBox="0 0 10 10"><path d="M1.500 5l2.500 2.500L8.500 2.500" /></svg>` : ""}
    </span>`;
  }

  private renderStatus() {
    return html`
      <div class="status">
        <span style="width:38px">层高：</span><span style="width:51px">4.4</span>
        <span style="width:40px">标高：</span><span style="width:100px">-4.4~0</span>
        <span style="width:110px">选中图元：1(1)</span><span>隐藏图元：0</span>
        <div class="sbtns">
          <div class="sb on" style="width:26px">${this.ic("ortho")}</div>
          <div class="sb on" style="width:36px;margin-left:2px">${this.ic("srect")}<span class="caret"></span></div>
          <div class="sb" style="width:23px;margin-left:7px">${this.ic("cross")}</div>
          <div class="sb" style="width:35px;margin-left:7px">${this.ic("angle")}<span class="caret"></span></div>
          <div class="sb" style="width:38px;margin-left:4px">${this.ic("dimt")}<span class="caret"></span></div>
          <div class="sb" style="width:25px;margin-left:1px">${this.ic("map3")}</div>
          <div class="sb" style="width:24px;margin-left:4px">${this.ic("edge")}</div>
        </div>
      </div>
      <div class="task">
        <i style="width:48px;background:#203a45"></i>
        <i style="width:344px;background:#efefef"></i>
        <i style="width:53px;background:#223a45"></i>
        <i style="width:47px;background:#5a6a70"></i>
        <i style="width:808px;background:linear-gradient(90deg,#223a45,#1b2c42)"></i>
        <b>10:33</b>
      </div>
    `;
  }

  render() {
    return html`
      <div class="app">
        ${this.renderHead()}
        ${this.renderRibbon()}
        <div class="main">
          ${this.renderNav()}
          ${this.renderMid()}
          <div class="vgut"><i></i></div>
          ${this.renderCanvas()}
          <div class="vgut" style="width:4px"><i></i></div>
          ${this.renderRight()}
        </div>
        ${this.renderStatus()}
        <i class="topmark" style="left:840px;width:70px;background:#1e8fff"></i>
        <i class="topmark" style="left:1570px;width:243px;background:#9a9a9a"></i>
        <div class="float">
          <svg class="sh" viewBox="0 0 14 16">
            <path fill="#e23a22" d="M7 0l7 2.500V9c0 3-3 5.500-7 7-4-1.500-7-4-7-7V2.500z" />
            <text x="7" y="12" fill="#fff" font-size="11" font-weight="700" text-anchor="middle">1</text>
          </svg>
          <div class="therm"></div>
          <div class="sp">0.8<em><i style="color:#1ea7ff">↑</i>K/s</em></div>
          <div class="sp">1.3<em><i style="color:#10c060">↓</i>K/s</em></div>
        </div>
      </div>
    `;
  }
}
